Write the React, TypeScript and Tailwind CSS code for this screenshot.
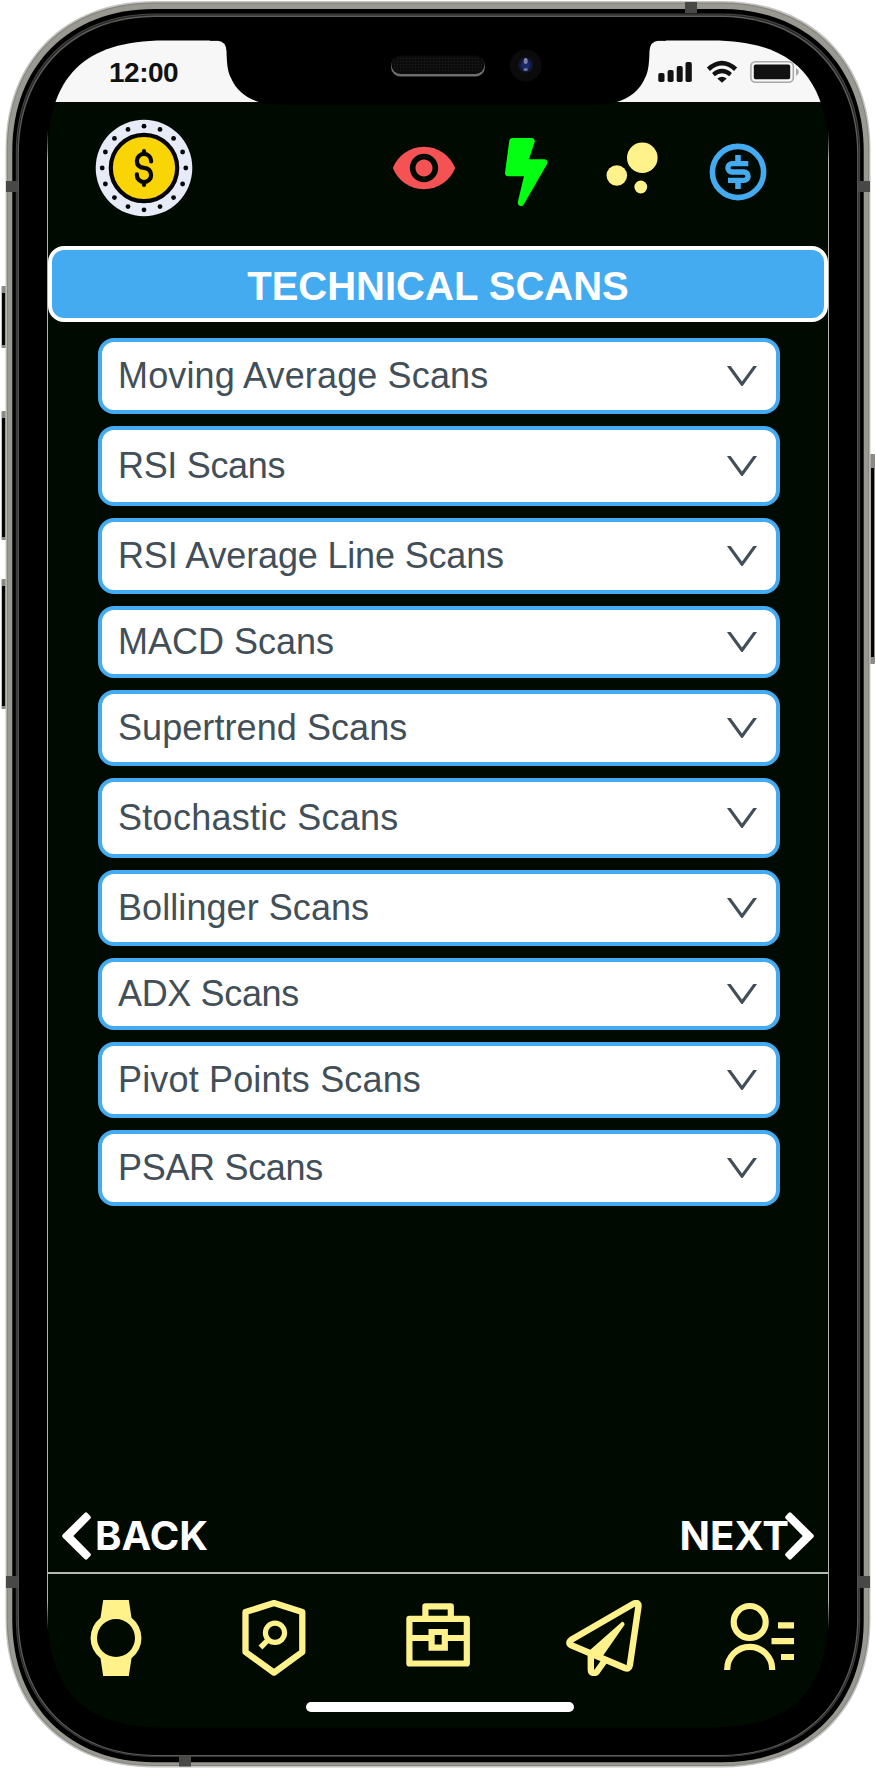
import React from "react";

const SCANS: { label: string; height: string; tracking: string }[] = [
  { label: "Moving Average Scans", height: "h-[76px]", tracking: "tracking-[0.14px]" },
  { label: "RSI Scans", height: "h-20", tracking: "tracking-[-0.32px]" },
  { label: "RSI Average Line Scans", height: "h-[76px]", tracking: "tracking-[-0.17px]" },
  { label: "MACD Scans", height: "h-[72px]", tracking: "tracking-normal" },
  { label: "Supertrend Scans", height: "h-[76px]", tracking: "tracking-[0.07px]" },
  { label: "Stochastic Scans", height: "h-20", tracking: "tracking-[0.28px]" },
  { label: "Bollinger Scans", height: "h-[76px]", tracking: "tracking-[0.07px]" },
  { label: "ADX Scans", height: "h-[72px]", tracking: "tracking-[-0.35px]" },
  { label: "Pivot Points Scans", height: "h-[76px]", tracking: "tracking-[0.16px]" },
  { label: "PSAR Scans", height: "h-[76px]", tracking: "tracking-[-0.32px]" },
];

/** Rectangle with continuous (squircle-like) corners. */
function shell(x0: number, y0: number, x1: number, y1: number, r: number, k: number) {
  const c = r * (1 - k);
  return [
    `M${x0 + r} ${y0}H${x1 - r}`,
    `C${x1 - c} ${y0} ${x1} ${y0 + c} ${x1} ${y0 + r}`,
    `V${y1 - r}`,
    `C${x1} ${y1 - c} ${x1 - c} ${y1} ${x1 - r} ${y1}`,
    `H${x0 + r}`,
    `C${x0 + c} ${y1} ${x0} ${y1 - c} ${x0} ${y1 - r}`,
    `V${y0 + r}`,
    `C${x0} ${y0 + c} ${x0 + c} ${y0} ${x0 + r} ${y0}Z`,
  ].join("");
}

function PhoneFrame() {
  const screen = shell(47.5, 40.5, 828.5, 1727.5, 117, 0.69);
  return (
    <svg className="absolute inset-0" width="876" height="1768" viewBox="0 0 876 1768" fill="none" aria-hidden="true">
      <defs>
        <clipPath id="screen">
          <path d={screen} />
        </clipPath>
        <linearGradient id="edge" x1="0" y1="130" x2="0" y2="1630" gradientUnits="userSpaceOnUse">
          <stop offset="0" stopColor="#b4b6b2" stopOpacity="0" />
          <stop offset="0.02" stopColor="#b4b6b2" />
          <stop offset="0.98" stopColor="#b4b6b2" />
          <stop offset="1" stopColor="#b4b6b2" stopOpacity="0" />
        </linearGradient>
        <pattern id="mesh" width="3" height="3" patternUnits="userSpaceOnUse">
          <rect width="3" height="3" fill="#0b0b0b" />
          <circle cx="1.5" cy="1.5" r="0.8" fill="#1d1d1d" />
        </pattern>
      </defs>
      {[
        [286, 348],
        [411, 540],
        [579, 709],
      ].map(([a, b]) => (
        <g key={a}>
          <rect x="1.5" y={a} width="5" height={b - a} rx="1" fill="#8b8a85" />
          <rect x="2" y={a + 7} width="3.2" height={b - a - 10} fill="#050505" />
        </g>
      ))}
      <rect x="870" y="454" width="5" height="210" rx="1" fill="#8b8a85" />
      <rect x="871" y="468" width="3" height="189" fill="#050505" />
      <path d={shell(5.5, 1, 870.5, 1767.5, 148, 0.6)} fill="#c4c4c2" />
      <path d={shell(6.8, 2.6, 869.2, 1766, 147, 0.6)} fill="#85847f" />
      <path d={shell(7.8, 3.8, 868.2, 1765, 146, 0.6)} fill="#9a9991" />
      <path d={shell(12.3, 9, 863.7, 1762.3, 142, 0.6)} fill="#000" />
      <path d={shell(15.8, 13.4, 860.2, 1757, 139, 0.6)} fill="#454543" />
      <path d={shell(16.8, 14.6, 859.2, 1756.4, 138, 0.6)} fill="#262625" />
      <path d={shell(17.6, 15.6, 858.4, 1756, 138, 0.6)} fill="#5c5c5a" />
      <path d={shell(18.9, 17, 857.1, 1755, 137, 0.6)} fill="#000" />
      <g fill="#484846">
        <rect x="6" y="181" width="12" height="11" />
        <rect x="858" y="181" width="12" height="11" />
        <rect x="6" y="1576" width="12" height="12" />
        <rect x="858" y="1576" width="12" height="12" />
        <rect x="685" y="2" width="12" height="11" />
        <rect x="179" y="1755.5" width="12" height="11" />
      </g>
      <path d={screen} fill="#000a00" />
      <g clipPath="url(#screen)">
        <rect x="40" y="40" width="796" height="62" fill="#f7f7f7" />
      </g>
      <path
        d="M210 38V40.7H218Q226 41.5 226.5 51C226.8 62 227.5 72 231 78C236 90 246 98 259 102Q266 104.7 280 104.7H596Q610 104.7 617 102C630 98 640 90 645 78C648.5 72 649.2 62 649.5 51Q650 41.5 658 40.7H666V38Z"
        fill="#000"
      />
      <g fill="url(#edge)">
        <rect x="47" y="130" width="1" height="1500" />
        <rect x="828" y="130" width="1" height="1500" />
      </g>
      <rect x="391" y="56.5" width="94" height="20" rx="9.5" fill="#6e6e6e" />
      <rect x="391.5" y="55.5" width="93" height="18.5" rx="9" fill="#0b0b0b" />
      <rect x="393.5" y="57.5" width="89" height="15" rx="7.5" fill="url(#mesh)" />
      <circle cx="525.7" cy="65.5" r="16" fill="#0b0b0c" />
      <circle cx="525.7" cy="65" r="7.5" fill="#11183a" />
      <circle cx="525.7" cy="65" r="4.5" fill="#182a66" />
      <ellipse cx="525.7" cy="61" rx="2" ry="3" fill="#7f7fa8" />
      <ellipse cx="525.7" cy="69.5" rx="2.2" ry="1.6" fill="#5f78a8" />
    </svg>
  );
}

function StatusIcons() {
  return (
    <svg className="ml-auto mt-[60px]" width="142" height="24" viewBox="658 60 142 24" fill="#111" aria-hidden="true">
      <rect x="658.3" y="73" width="6.2" height="9" rx="1.8" />
      <rect x="667.6" y="70" width="6" height="12" rx="1.8" />
      <rect x="676.7" y="66" width="6" height="16" rx="1.8" />
      <rect x="685.5" y="62" width="6.3" height="20" rx="1.8" />
      <path d="M717.3 78.5Q722 75.2 726.7 78.5L722 82.8Z" />
      <path d="M713.4 74.6Q722 67.4 730.6 74.6" fill="none" stroke="#111" strokeWidth="4.2" />
      <path d="M708.4 69.2Q722 57 735.6 69.2" fill="none" stroke="#111" strokeWidth="4.6" />
      <rect x="750.9" y="61.7" width="42.4" height="20.6" rx="4.5" fill="none" stroke="#a9a9a9" strokeWidth="1.6" />
      <rect x="753.8" y="64.4" width="36.4" height="14.8" rx="1.8" />
      <path d="M796 68Q798.8 69.5 798.8 72T796 76Z" fill="#a9a9a9" />
    </svg>
  );
}

function CoinIcon() {
  const dots = Array.from({ length: 16 }, (_, i) => (i * Math.PI) / 8);
  return (
    <svg width="98" height="98" viewBox="-49 -49 98 98" fill="none" aria-hidden="true">
      <circle r="48.3" fill="#e7eaf7" />
      {dots.map((a) => (
        <circle key={a} cx={41.8 * Math.sin(a)} cy={-41.8 * Math.cos(a)} r="2.4" fill="#05060a" />
      ))}
      <circle r="33.2" fill="#f9d506" stroke="#06060a" strokeWidth="4.2" />
      <path
        d="M7.1 -6.6V-7.3A7.1 6.8 0 0 0 -7.1 -7.3C-7.1 -2.5 -4 -0.4 0 -0.2S7.1 2.5 7.1 7.3A7.1 6.8 0 0 1 -7.1 7.3V6.4M0 -14.5V-17M0 14.5V17"
        stroke="#06060a"
        strokeWidth="4.2"
        strokeLinecap="round"
      />
    </svg>
  );
}

function EyeIcon() {
  return (
    <svg className="ml-[197px]" width="68" height="68" viewBox="0 0 24 24" fill="#f55353" aria-hidden="true">
      <path d="M12 4.5C7 4.5 2.73 7.61 1 12c1.73 4.39 6 7.5 11 7.5s9.27-3.11 11-7.5c-1.73-4.39-6-7.5-11-7.5zM12 17c-2.76 0-5-2.24-5-5s2.24-5 5-5 5 2.24 5 5-2.24 5-5 5zm0-8c-1.66 0-3 1.34-3 3s1.34 3 3 3 3-1.34 3-3-1.34-3-3-3z" />
    </svg>
  );
}

function BoltIcon() {
  return (
    <svg className="ml-[47px] mt-1" width="42.5" height="68" viewBox="0 0 320 512" fill="#04ff12" aria-hidden="true">
      <path d="M296 160H180.6l42.6-129.8C227.2 15 215.7 0 200 0H56C44 0 33.8 8.9 32.2 20.8l-32 240C-1.7 275.2 9.5 288 24 288h118.7L96.6 482.5c-3.6 15.2 8 29.5 23.3 29.5 8.4 0 16.4-4.4 20.8-12l176-304c9.3-15.9-2.2-36-20.7-36z" />
    </svg>
  );
}

function BubblesIcon() {
  return (
    <svg className="ml-[58.5px] mt-2" width="52" height="52" viewBox="606 142 52 52" fill="#fff28a" aria-hidden="true">
      <circle cx="642.3" cy="157.8" r="15.3" />
      <circle cx="616.8" cy="175.5" r="10.3" />
      <circle cx="640.8" cy="187" r="6.4" />
    </svg>
  );
}

function DollarIcon() {
  return (
    <svg className="ml-[51px] mt-[9px]" width="58" height="58" viewBox="709 143 58 58" fill="none" stroke="#44abf1" strokeWidth="5.6" aria-hidden="true">
      <circle cx="738" cy="172" r="25.6" />
      <path strokeWidth="5.4" d="M748.3 163.6H732.1A4.2 4.2 0 0 0 732.1 172H743.9A4.2 4.2 0 0 1 743.9 180.4H728" />
      <path d="M738 155V163M738 181V189" />
    </svg>
  );
}

function DownIcon() {
  return (
    <svg width="40" height="40" viewBox="0 0 1024 1024" fill="#424f58" aria-hidden="true">
      <path d="M884 256h-75c-5.1 0-9.9 2.5-12.9 6.6L512 654.2 227.9 262.6c-3-4.1-7.8-6.6-12.9-6.6h-75c-6.5 0-10.3 7.4-6.5 12.7l352.6 486.1c12.8 17.6 39 17.6 51.7 0l352.6-486.1c3.9-5.3.1-12.7-6.4-12.7z" />
    </svg>
  );
}

function ChevronIcon({ className = "" }: { className?: string }) {
  return (
    <svg className={className} width="30" height="48" viewBox="61 1512 30 48" fill="#fff" stroke="#fff" strokeWidth="4" strokeLinejoin="round" aria-hidden="true">
      <path d="M64.2 1536L86 1514.4L88.8 1517.3L70.4 1536L88.8 1554.7L86 1557.6Z" />
    </svg>
  );
}

const NAV_COLOR = "#fff28a";

function WatchIcon() {
  return (
    <svg className="ml-[42px]" width="52" height="76" viewBox="90 1600 52 76" fill={NAV_COLOR} aria-hidden="true">
      <path
        fillRule="evenodd"
        d="M103.2 1600H128.8L131.5 1617.8A25.5 25.5 0 0 1 131.5 1658.2L128.8 1676H103.2L100.5 1658.2A25.5 25.5 0 0 1 100.5 1617.8ZM116 1619A19 19 0 1 0 116 1657A19 19 0 1 0 116 1619Z"
      />
    </svg>
  );
}

function ShieldSearchIcon() {
  return (
    <svg className="ml-[100px]" width="64" height="76" viewBox="242 1600 64 76" fill="none" stroke={NAV_COLOR} strokeWidth="6.3" strokeLinejoin="round" aria-hidden="true">
      <path d="M274 1603.1L302.3 1612V1652L274 1672.6L245.5 1652V1612Z" />
      <circle cx="275" cy="1632.8" r="9.6" strokeWidth="5.2" />
      <path d="M268.6 1639.3L260.5 1647.5" strokeWidth="5.4" />
    </svg>
  );
}

function ToolboxIcon() {
  return (
    <svg className="ml-[100px]" width="64" height="76" viewBox="406 1600 64 76" fill="none" stroke={NAV_COLOR} strokeWidth="6.2" strokeLinejoin="round" aria-hidden="true">
      <path d="M409.4 1618.8H466.8V1663.5H409.4ZM425.4 1618V1606.4H450.8V1618M409.4 1638H431.6M444.8 1638H466.8" />
      <path strokeLinejoin="miter" d="M431.6 1632H444.8V1647.7H431.6Z" />
    </svg>
  );
}

function PlaneIcon() {
  return (
    <svg className="ml-24" width="76" height="76" viewBox="566 1600 76 76" fill="none" stroke={NAV_COLOR} strokeWidth="6.4" strokeLinejoin="round" strokeLinecap="round" aria-hidden="true">
      <path d="M633.5 1603.8Q639.2 1601.4 638.4 1607L629.8 1665.5Q629 1669.8 625 1668L571.3 1645.2Q567.4 1642.8 571.3 1639.8Z" />
      <path strokeLinecap="butt" d="M590.8 1652V1669.5C590.8 1674 595.5 1673.5 597 1671.5L604.5 1661" />
      <path fill={NAV_COLOR} strokeWidth="2.4" d="M622.6 1623L590 1651.6L601 1656.5L623.4 1624.2Z" />
    </svg>
  );
}

function UserListIcon() {
  return (
    <svg className="ml-[81px]" width="72" height="76" viewBox="723 1600 72 76" fill="none" stroke={NAV_COLOR} strokeWidth="6.2" aria-hidden="true">
      <circle cx="749.7" cy="1622" r="16" />
      <path d="M727.2 1670V1669.3A22.5 22.5 0 0 1 772.2 1669.3V1670M778 1625.3H794M771.5 1641.2H794M781 1657H794" />
    </svg>
  );
}

export default function App() {
  return (
    <div className="relative h-[1768px] w-[876px] overflow-hidden bg-white font-['Liberation_Sans',Arial,sans-serif]">
      <PhoneFrame />
      <main className="relative flex h-full flex-col px-12">
        <div className="flex h-[102px] items-start pl-[61px] pr-7">
          <span className="mt-[57px] text-[28px] font-bold leading-8 tracking-[-0.5px] text-[#111]">12:00</span>
          <StatusIcons />
        </div>

        <header className="flex h-36 items-start pl-[47px] pt-[17px]">
          <CoinIcon />
          <div className="flex items-start pt-[15px]">
            <EyeIcon />
            <BoltIcon />
            <BubblesIcon />
            <DollarIcon />
          </div>
        </header>

        <h1 className="flex h-[76px] items-center justify-center rounded-2xl border-4 border-white bg-[#44abf1] pt-1 text-[40px] font-bold leading-none text-white">
          TECHNICAL SCANS
        </h1>

        <ul className="mt-4 flex flex-col gap-3 pl-[50px] pr-12">
          {SCANS.map(({ label, height, tracking }) => (
            <li key={label} className={height}>
              <button className="flex h-full w-full items-center justify-between rounded-2xl border-4 border-[#44abf1] bg-white pl-4 pr-3.5 text-4xl text-[#424f58]">
                <span className={tracking}>{label}</span>
                <DownIcon />
              </button>
            </li>
          ))}
        </ul>

        <div className="mt-auto flex h-[74px] items-center justify-between border-b-2 border-[#b6b9b6] px-[13px] font-['Inter',sans-serif] text-[40px] font-bold leading-none text-white">
          <button className="flex items-center gap-1">
            <ChevronIcon />
            <span>BACK</span>
          </button>
          <button className="flex items-center">
            <span>NEXT</span>
            <ChevronIcon className="-ml-1 rotate-180" />
          </button>
        </div>

        <nav className="flex h-32 items-start pt-[26px]">
          <WatchIcon />
          <ShieldSearchIcon />
          <ToolboxIcon />
          <PlaneIcon />
          <UserListIcon />
        </nav>
        <div className="mb-14 ml-[258px] h-2.5 w-[268px] shrink-0 rounded-full bg-white" />
      </main>
    </div>
  );
}
